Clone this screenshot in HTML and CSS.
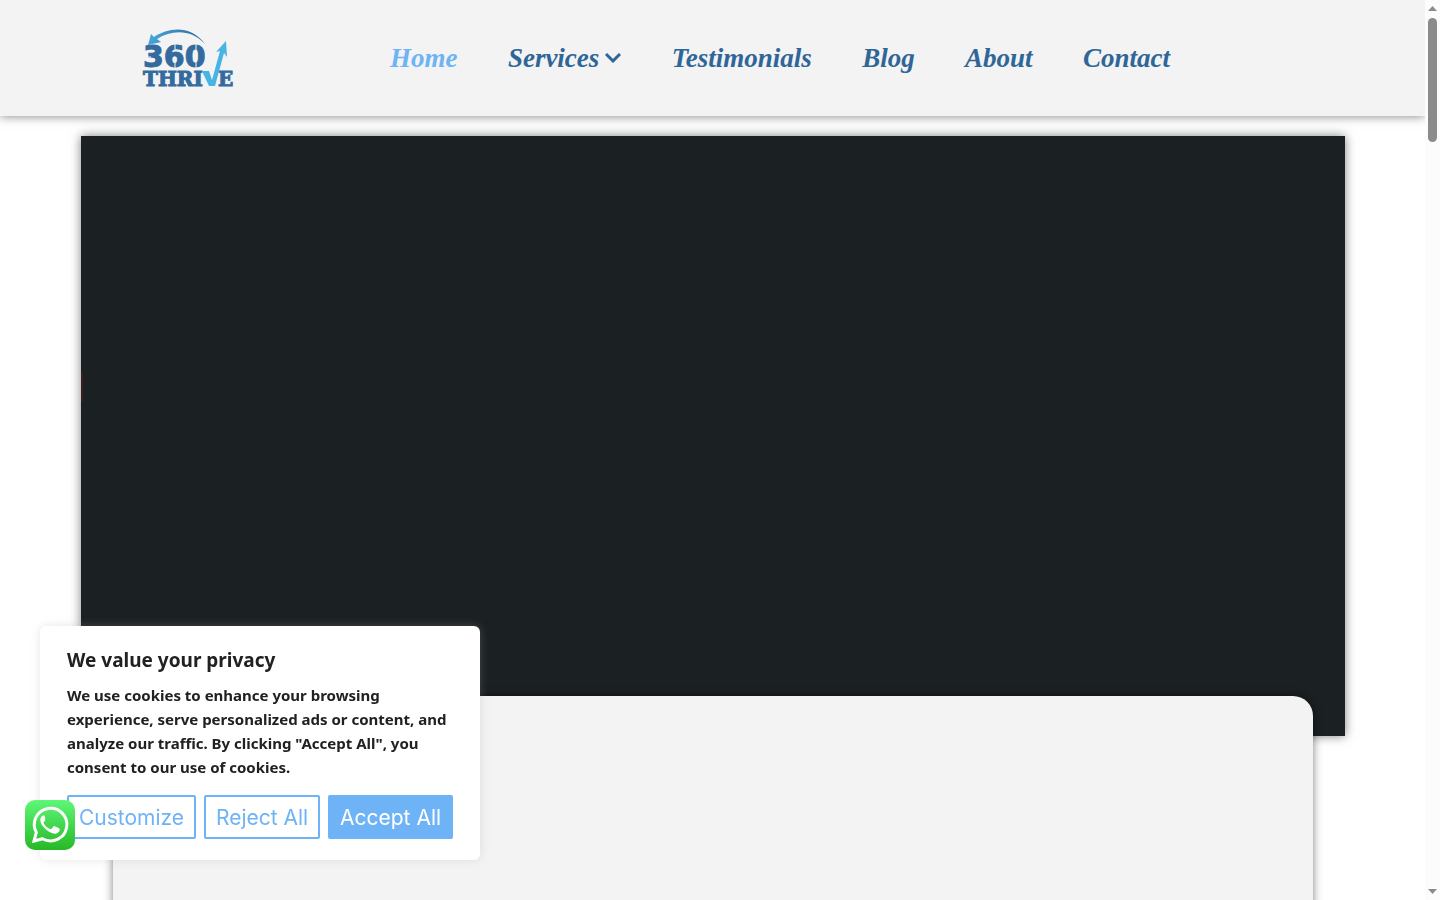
FILE: index.html
```html
<!DOCTYPE html>
<html lang="en">
<head>
  <meta charset="utf-8">
  <meta name="viewport" content="width=device-width, initial-scale=1">
  <title>360 Thrive</title>
  <link rel="stylesheet" href="styles.css">
</head>
<body>
  <div class="page">
    <header class="header">
      <a class="logo" href="#" aria-label="360 Thrive">
        <svg width="92" height="60" viewBox="0 0 92 60">
          <defs>
            <linearGradient id="arc" x1="0" x2="1">
              <stop offset="0" stop-color="#46a8dc"/>
              <stop offset="1" stop-color="#2f659b"/>
            </linearGradient>
          </defs>
          <path fill="url(#arc)" d="M6 17 9 6l3 3C26 0 48-4 63 16 50 2 31 1 15 11l4 3z"/>
          <text class="logo-text"><tspan class="logo-number" x="1" y="39">360</tspan><tspan x="1" y="58">THRI</tspan><tspan x="76" y="58">E</tspan></text>
          <path class="logo-cut" d="M0 29h9M33 16v6M33 34v7M54 16v8M54 33v8"/>
          <path fill="#47b4e4" d="M60 43h7l3 9 8-29-4 1 10-11 1 16-3-4-9 33h-6z"/>
        </svg>
      </a>
      <nav class="nav">
        <a class="active" href="#">Home</a>
        <a href="#">Services
          <svg class="chevron" width="16" height="10" viewBox="0 0 16 10"><path d="M1 1l7 7 7-7"/></svg>
        </a>
        <a href="#">Testimonials</a>
        <a href="#">Blog</a>
        <a href="#">About</a>
        <a href="#">Contact</a>
      </nav>
    </header>

    <main>
      <section class="hero"></section>
      <section class="panel"></section>
    </main>
  </div>

  <div class="scrollbar">
    <svg width="9" height="5" viewBox="0 0 9 5"><path d="M0 5 4.500 0 9 5z"/></svg>
    <div class="thumb"></div>
    <svg class="down" width="9" height="5" viewBox="0 0 9 5"><path d="M0 0h9L4.500 5z"/></svg>
  </div>

  <div class="cookie" role="dialog" aria-labelledby="cookie-title">
    <h2 id="cookie-title">We value your privacy</h2>
    <p>We use cookies to enhance your browsing experience, serve personalized ads or content, and analyze our traffic. By clicking "Accept All", you consent to our use of cookies.</p>
    <div class="cookie-buttons">
      <button type="button">Customize</button>
      <button type="button">Reject All</button>
      <button type="button" class="accept">Accept All</button>
    </div>
  </div>

  <a class="whatsapp" href="#" aria-label="WhatsApp">
    <svg width="50" height="50" viewBox="0 0 50 50">
      <defs>
        <linearGradient id="wa" x1="0" y1="0" x2="0" y2="1">
          <stop offset="0" stop-color="#5ff777"/>
          <stop offset="1" stop-color="#27b826"/>
        </linearGradient>
      </defs>
      <rect width="50" height="50" rx="10" fill="url(#wa)"/>
      <path fill="none" stroke="#fff" stroke-width="3" d="M9 41l2.300-8.600A16.300 16.300 0 1 1 17.500 38.700z"/>
      <path fill="#fff" d="M19.800 16.200c-.5-.9-.9-.9-1.600-.8-1.400.2-2.900 2.100-2.900 4.600 0 3 2.200 5.800 3.700 7.600 2.500 3 5.600 5.100 9.500 6 2.700.6 5.600-.8 6.100-3 .3-1.500.2-1.900-.5-2.300l-4.300-2.100c-.6-.2-1-.2-1.400.4l-1.800 2.200c-.4.400-.8.400-1.300.2-3-1.200-5.200-3.200-6.700-5.800-.3-.5-.1-.9.300-1.300l1.200-1.500c.3-.4.300-.8.100-1.300z"/>
    </svg>
  </a>
</body>
</html>
```
FILE: styles.css
```css
* {
  box-sizing: border-box;
}

body {
  margin: 0;
  height: 100vh;
  overflow: hidden;
  display: flex;
  background: #fff;
  font-family: "Noto Sans", sans-serif;
}

.page {
  flex: 1;
  overflow: hidden;
}

.header {
  display: flex;
  align-items: center;
  height: 116px;
  padding: 0 255px 0 142px;
  background: #f3f3f3;
  box-shadow: 0 0 10px rgba(0, 0, 0, 0.5);
}

.logo svg {
  display: block;
  overflow: visible;
}

.logo-text {
  font: bold 20px "DejaVu Serif", serif;
  fill: #346b9f;
  stroke: #346b9f;
}

.logo-number {
  font: bold 30px "DejaVu Sans", sans-serif;
}

.logo-cut {
  stroke: #f3f3f3;
  stroke-width: 1;
}

.nav {
  flex: 1;
  display: flex;
  justify-content: space-between;
  margin-left: 156px;
  font: italic bold 27px/32px "Liberation Serif", serif;
}

.nav a {
  display: flex;
  align-items: center;
  gap: 6px;
  color: #2f6698;
  text-decoration: none;
}

.nav .active {
  color: #6eb3f5;
}

.chevron {
  fill: none;
  stroke: #2f6698;
  stroke-width: 3;
}

.hero {
  position: relative;
  max-width: 1264px;
  height: 600px;
  margin: 20px auto 0;
  background: #1b2023;
  box-shadow: 0 0 10px rgba(0, 0, 0, 0.5);
}

.hero::before {
  content: "";
  position: absolute;
  left: 0;
  top: 236px;
  width: 2px;
  height: 30px;
  background: #3a1e1f;
}

.panel {
  position: relative;
  max-width: 1200px;
  height: 600px;
  margin: -40px auto 0;
  border-radius: 20px;
  background: #f3f3f3;
  box-shadow: 0 0 10px rgba(0, 0, 0, 0.5);
}

.scrollbar {
  display: flex;
  flex-direction: column;
  align-items: center;
  width: 15px;
  padding: 6px 0;
  background: #fcfcfc;
}

.scrollbar svg {
  fill: #8b8b8b;
}

.thumb {
  width: 9px;
  height: 124px;
  margin-top: 7px;
  border-radius: 5px;
  background: #8b8b8b;
}

.scrollbar .down {
  margin-top: auto;
}

.cookie {
  position: fixed;
  left: 40px;
  bottom: 40px;
  width: 440px;
  padding: 22px 27px 21px;
  border-radius: 6px;
  background: #fff;
  color: #212121;
  box-shadow: 0 0 10px rgba(172, 171, 171, 0.3);
}

.cookie h2 {
  margin: 0 0 11px;
  font-size: 19px;
  font-weight: 700;
  line-height: 24px;
}

.cookie p {
  margin: 0 0 16px;
  font-size: 15px;
  font-weight: 700;
  line-height: 24px;
}

.cookie-buttons {
  display: flex;
  gap: 8px;
}

.cookie button {
  flex: auto;
  height: 44px;
  padding: 0;
  border: 2px solid #6eb3f5;
  border-radius: 2px;
  background: #fff;
  color: #6eb3f5;
  font: 400 21px "Inter", sans-serif;
  white-space: nowrap;
}

.cookie .accept {
  background: #6eb3f5;
  color: #fff;
}

.whatsapp {
  position: fixed;
  left: 25px;
  bottom: 50px;
}

.whatsapp svg {
  display: block;
}
```
